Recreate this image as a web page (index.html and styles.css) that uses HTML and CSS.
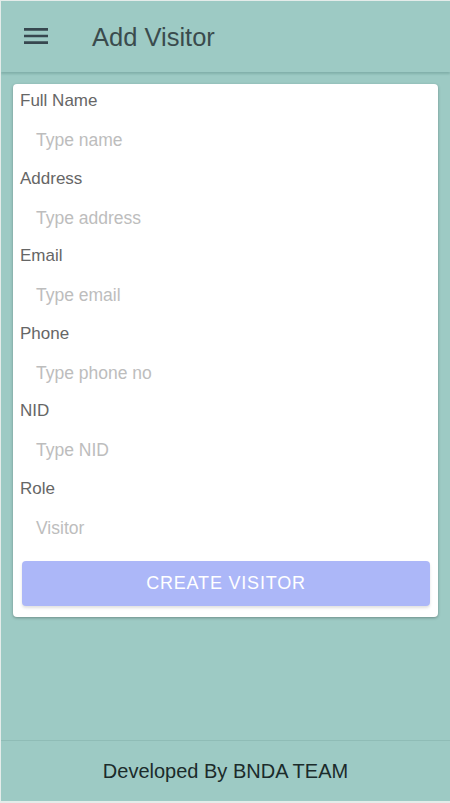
FILE: index.html
```html
<!DOCTYPE html>
<html>
<head>
<meta charset="utf-8">
<link rel="stylesheet" href="styles.css">
</head>
<body>
<div class="app">
  <header class="topbar">
    <svg class="menu" viewBox="0 0 24 24" width="32" height="32"><path d="M3 18h18v-2H3v2zm0-5h18v-2H3v2zm0-7v2h18V6H3z" fill="#37474f"/></svg>
    <h1 class="title">Add Visitor</h1>
  </header>
  <main class="content">
    <form class="card">
      <div class="field"><label class="label">Full Name</label><div class="input">Type name</div></div>
      <div class="field"><label class="label">Address</label><div class="input">Type address</div></div>
      <div class="field"><label class="label">Email</label><div class="input">Type email</div></div>
      <div class="field"><label class="label">Phone</label><div class="input">Type phone no</div></div>
      <div class="field"><label class="label">NID</label><div class="input">Type NID</div></div>
      <div class="field"><label class="label">Role</label><div class="input">Visitor</div></div>
      <button type="button" class="btn">CREATE VISITOR</button>
    </form>
  </main>
  <footer class="footer">Developed By BNDA TEAM</footer>
</div>
</body>
</html>
```
FILE: styles.css
```css
html { background: #e4ecea; }
body {
  margin: 1px 0 2px 1px;
  font-family: "Liberation Sans", Arial, sans-serif;
}
.app {
  height: 800px;
  background: #9dcac4;
  display: flex;
  flex-direction: column;
}
.topbar {
  height: 71px;
  display: flex;
  align-items: center;
  padding-left: 19px;
  box-shadow: 0 2px 2px rgba(60, 110, 105, 0.28);
  position: relative;
  z-index: 1;
}
.menu { display: block; margin-top: -1px; }
.title {
  margin: 2px 0 0 40px;
  font-size: 25.5px;
  font-weight: normal;
  color: #3a4b4d;
}
.content {
  flex: 1;
  padding: 12px 12px 0 12px;
}
.card {
  background: #fff;
  border-radius: 4px;
  box-shadow: 0 1px 3px rgba(0, 0, 0, 0.3);
  padding: 7px 8px 11px 7px;
  display: flex;
  flex-direction: column;
}
.field { display: flex; flex-direction: column; }
.label {
  font-size: 17px;
  line-height: 20px;
  color: #666;
}
.input {
  font-size: 17.5px;
  line-height: 20px;
  color: #bdbdbd;
  padding: 19px 16px 18.6px;
}
.btn {
  margin: 4px 0 0 2px;
  height: 45px;
  border: none;
  border-radius: 4px;
  background: #acb7f8;
  color: #fff;
  font-family: "Liberation Sans", Arial, sans-serif;
  font-size: 18px;
  letter-spacing: 0.8px;
  box-shadow: 0 2px 3px rgba(0, 0, 0, 0.12);
}
.footer {
  height: 60px;
  border-top: 1.5px solid #8fbcb6;
  display: flex;
  align-items: center;
  justify-content: center;
  font-size: 20px;
  color: #1b2b2b;
}
```
